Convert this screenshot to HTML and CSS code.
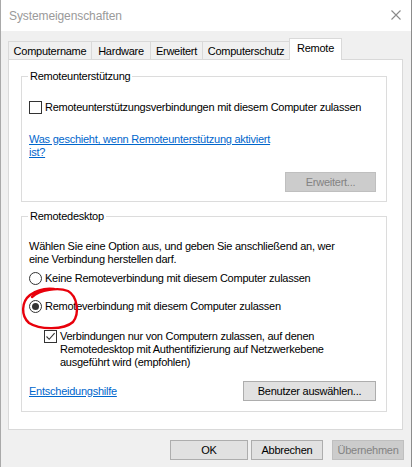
FILE: index.html
```html
<!DOCTYPE html>
<html lang="de">
<head>
<meta charset="utf-8">
<title>Systemeigenschaften</title>
<link rel="stylesheet" href="styles.css">
</head>
<body>
<div class="window">
  <div class="titlebar">
    <span class="title">Systemeigenschaften</span>
    <svg class="close" width="10" height="10" viewBox="0 0 10 10"><path d="M0.5 0.5L9.5 9.5M9.5 0.5L0.5 9.5" stroke="#8a8a8a" stroke-width="1.1" fill="none"/></svg>
  </div>
  <div class="client">
    <div class="tabs">
      <div class="tab t-name">Computername</div>
      <div class="tab t-hw">Hardware</div>
      <div class="tab t-erw">Erweitert</div>
      <div class="tab t-schutz">Computerschutz</div>
      <div class="tab active t-remote">Remote</div>
    </div>
    <div class="panel">
      <fieldset class="group g1">
        <legend>Remoteunterstützung</legend>
        <div class="gbody b1">
          <label class="check"><span class="box"></span><span>Remoteunterstützungsverbindungen mit diesem Computer zulassen</span></label>
          <a class="link l1" href="#">Was geschieht, wenn Remoteunterstützung aktiviert<br>ist?</a>
          <div class="btnrow r1"><button class="btn disabled w-erw">Erweitert...</button></div>
        </div>
      </fieldset>
      <fieldset class="group g2">
        <legend>Remotedesktop</legend>
        <div class="gbody b2">
          <p class="para">Wählen Sie eine Option aus, und geben Sie anschließend an, wer<br>eine Verbindung herstellen darf.</p>
          <label class="radio rd1"><span class="circle"></span><span>Keine Remoteverbindung mit diesem Computer zulassen</span></label>
          <label class="radio rd2"><span class="circle on"></span><span>Remoteverbindung mit diesem Computer zulassen</span></label>
          <label class="check sub"><span class="box"><svg width="11" height="11" viewBox="0 0 11 11"><path d="M1.5 5.5L4.2 8.3L9.6 2.2" stroke="#333" stroke-width="1.1" fill="none"/></svg></span><span>Verbindungen nur von Computern zulassen, auf denen<br>Remotedesktop mit Authentifizierung auf Netzwerkebene<br>ausgeführt wird (empfohlen)</span></label>
          <div class="btnrow r2"><a class="link" href="#">Entscheidungshilfe</a><button class="btn w-user">Benutzer auswählen...</button></div>
        </div>
      </fieldset>
    </div>
    <div class="footer">
      <button class="btn w-ok">OK</button>
      <button class="btn w-cancel">Abbrechen</button>
      <button class="btn disabled w-apply">Übernehmen</button>
    </div>
  </div>
</div>
<svg class="annot" width="412" height="467" viewBox="0 0 412 467"><path d="M32 297 C40 290 58 287 68 291 C77 296 80 313 73 322 C64 330 40 330 29 323 C21 316 21 302 30 295 C37 290 46 288 54 289" stroke="#e8000b" stroke-width="2.4" fill="none" stroke-linecap="round"/></svg>
</body>
</html>
```

FILE: styles.css
```css
html, body {
  margin: 0;
  padding: 0;
}
body {
  width: 412px;
  height: 467px;
  overflow: hidden;
  position: relative;
  background: #f0f0f0;
  font-family: "Liberation Sans", Arial, sans-serif;
  font-size: 11px;
  letter-spacing: -0.25px;
  line-height: 13px;
  color: #000;
}
.window {
  box-sizing: border-box;
  width: 412px;
  height: 467px;
  border-left: 1px solid #a9a9a9;
  border-right: 1px solid #8c8c8c;
  display: flex;
  flex-direction: column;
}
.titlebar {
  height: 31px;
  flex: none;
  background: #fff;
  display: flex;
  align-items: center;
  justify-content: space-between;
  padding: 0 10px 0 8px;
}
.title {
  color: #9a9a9a;
  font-size: 12px;
  letter-spacing: -0.1px;
  padding-top: 1px;
}
.close {
  display: block;
  margin-top: -1px;
}
.client {
  flex: 1;
  padding: 0 8px 0 7px;
}
.tabs {
  display: flex;
  align-items: flex-end;
  height: 22px;
  margin-top: 7px;
  margin-bottom: -1px;
  position: relative;
  z-index: 1;
}
.tab {
  box-sizing: border-box;
  height: 18px;
  margin-bottom: 1px;
  border: 1px solid #d9d9d9;
  border-bottom: none;
  border-right: none;
  background: #f0f0f0;
  display: flex;
  align-items: center;
  justify-content: center;
  white-space: nowrap;
  padding-top: 1px;
}
.t-name { width: 83px; }
.t-hw { width: 59px; }
.t-erw { width: 52px; }
.t-schutz { width: 87px; }
.tab.active {
  width: 53px;
  height: 22px;
  margin-bottom: 0;
  background: #fff;
  border-right: 1px solid #d9d9d9;
  align-items: flex-start;
  padding-top: 3px;
}
.panel {
  box-sizing: border-box;
  height: 371px;
  background: #fff;
  border: 1px solid #d9d9d9;
  padding: 10px 0 0 12px;
}
.group {
  box-sizing: border-box;
  width: 366px;
  margin: 0;
  padding: 0;
  border: 1px solid #dcdcdc;
  min-inline-size: 0;
}
.group legend {
  margin-left: 6px;
  padding: 0 2px;
  line-height: 13px;
}
.g2 {
  margin-top: 8px;
}
.gbody {
  display: flex;
  flex-direction: column;
  align-items: flex-start;
  padding: 0 10px 0 7px;
}
.b1 { padding-top: 18px; padding-bottom: 9px; }
.b2 { padding-top: 17px; padding-bottom: 10px; }
.check, .radio {
  display: flex;
  align-items: center;
  gap: 3px;
  white-space: nowrap;
}
.box {
  box-sizing: border-box;
  width: 13px;
  height: 13px;
  border: 1px solid #333;
  background: #fff;
  flex: none;
  display: flex;
  align-items: center;
  justify-content: center;
}
.box svg { display: block; }
.circle {
  box-sizing: border-box;
  width: 13px;
  height: 13px;
  border: 1px solid #333;
  border-radius: 50%;
  background: #fff;
  flex: none;
  display: flex;
  align-items: center;
  justify-content: center;
}
.circle.on::after {
  content: "";
  width: 7px;
  height: 7px;
  border-radius: 50%;
  background: #333;
}
.link {
  color: #0066cc;
  text-decoration: underline;
  white-space: nowrap;
}
.l1 { margin-top: 19px; }
.para {
  margin: 0;
  white-space: nowrap;
}
.rd1 { margin-top: 6px; }
.rd2 { margin-top: 15px; }
.sub {
  margin-top: 17px;
  margin-left: 15px;
  align-items: flex-start;
}
.btnrow {
  align-self: stretch;
  display: flex;
  justify-content: flex-end;
  align-items: center;
}
.r1 { margin-top: 13px; }
.r2 {
  margin-top: 12px;
  justify-content: space-between;
}
.btn {
  box-sizing: border-box;
  height: 20px;
  margin: 0;
  padding: 0;
  border: 1px solid #adadad;
  background: #e1e1e1;
  font: inherit;
  letter-spacing: inherit;
  line-height: 13px;
  color: #000;
  white-space: nowrap;
}
.btn.disabled {
  background: #cccccc;
  border-color: #bfbfbf;
  color: #838383;
}
.w-erw { width: 91px; }
.w-user { width: 133px; }
.footer {
  display: flex;
  justify-content: flex-end;
  margin-top: 10px;
  margin-right: -1px;
}
.w-ok { width: 78px; }
.w-cancel { width: 72px; margin-left: 3px; }
.w-apply { width: 72px; margin-left: 9px; }
.annot {
  position: absolute;
  left: 0;
  top: 0;
  pointer-events: none;
}
```
